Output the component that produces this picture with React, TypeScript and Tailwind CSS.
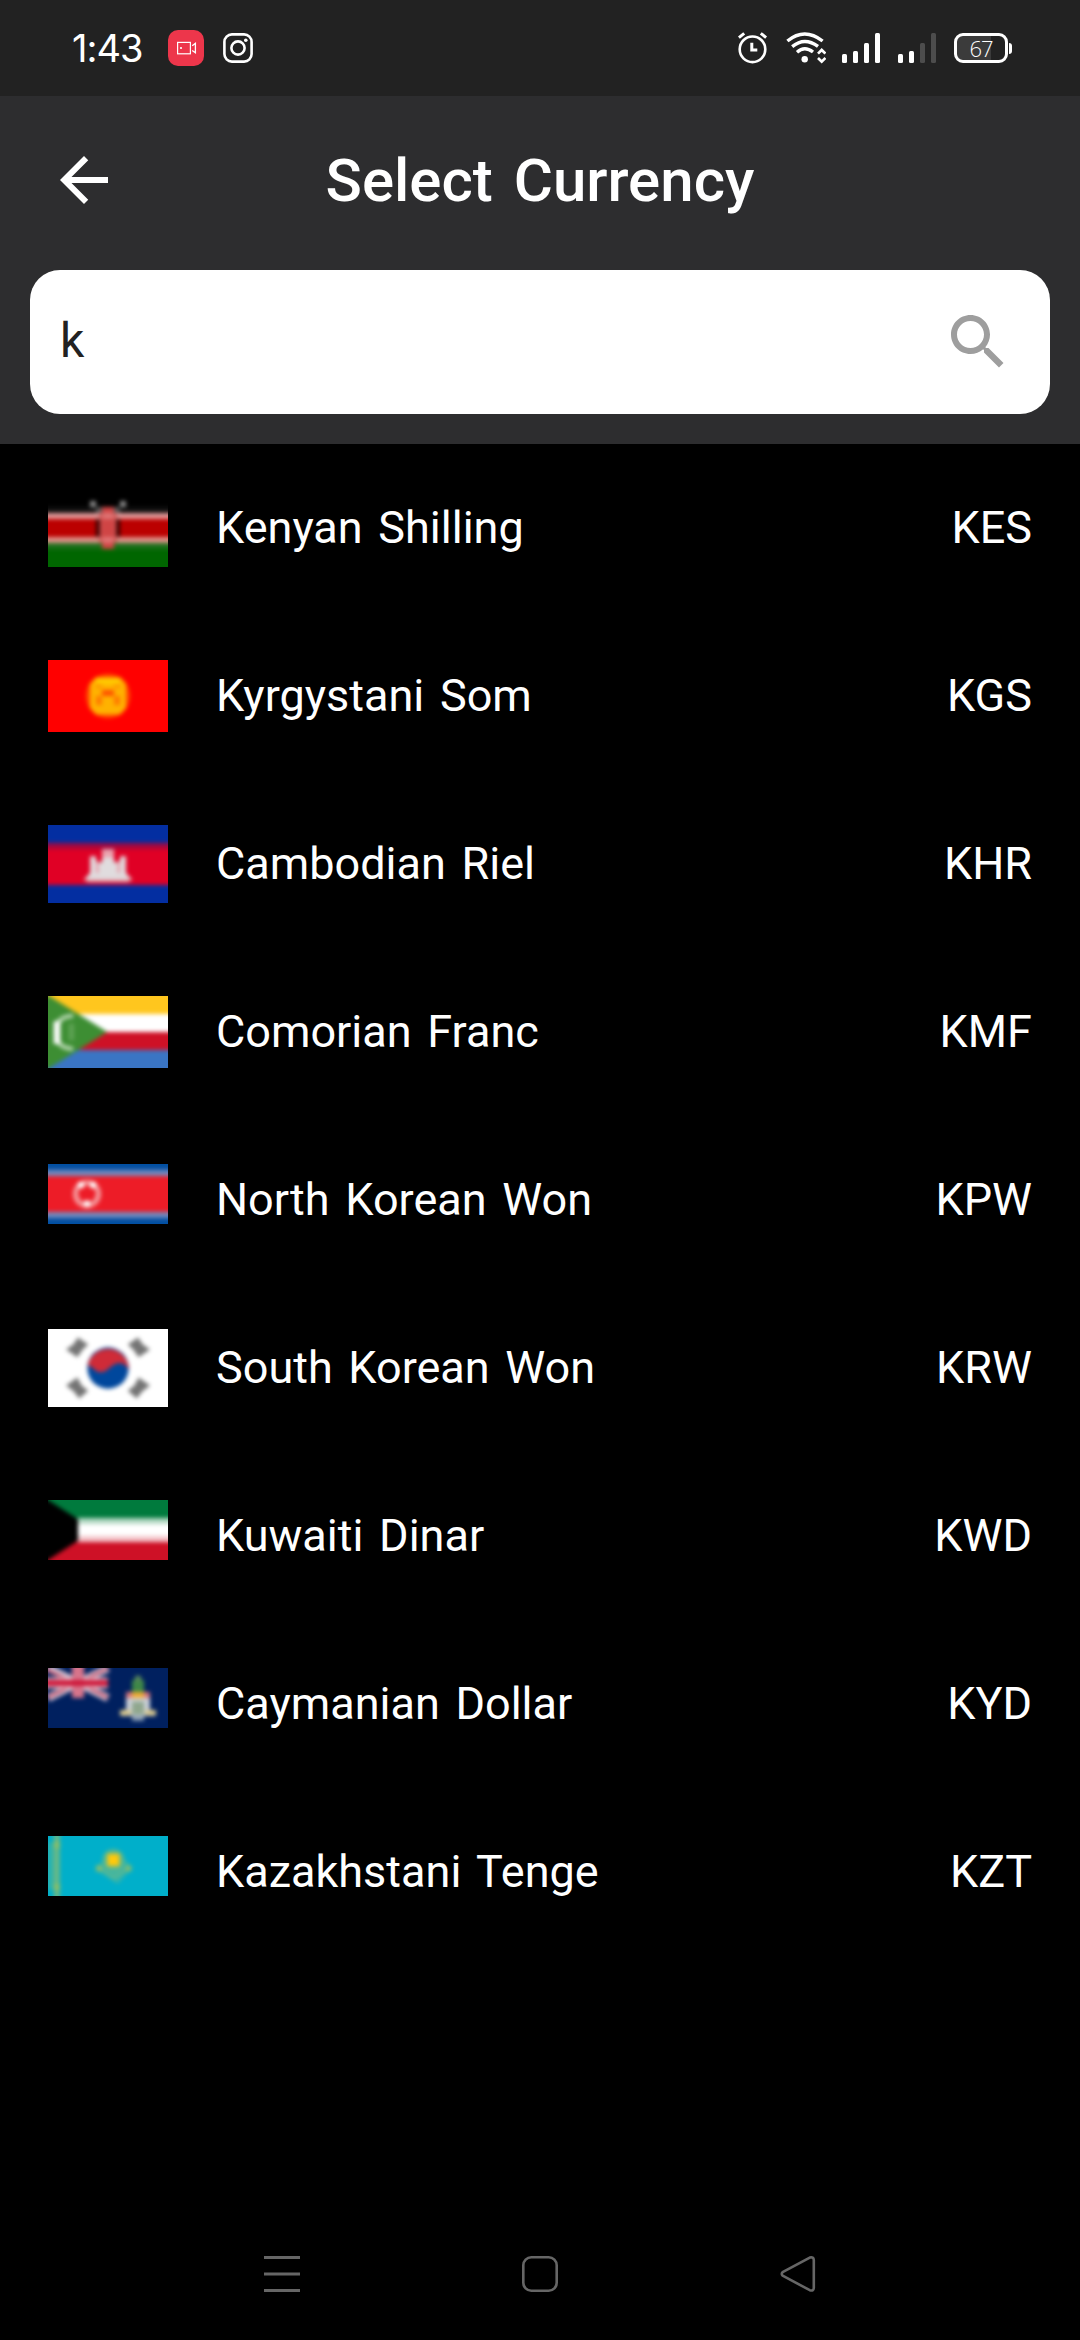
import React, { ReactNode } from "react";

/* Flags are drawn on a 20-unit wide grid and softened like small upscaled thumbnails. */
function Flag({ h, children }: { h: 10 | 12 | 13; children: ReactNode }) {
  const size = { 10: "h-[60px]", 12: "h-[72px]", 13: "h-[78px]" }[h];
  return (
    <svg viewBox={`0 0 20 ${h}`} className={`block w-[120px] ${size}`}>
      <defs>
        <filter id="soft" filterUnits="userSpaceOnUse" x="-4" y="-4" width="28" height="22" colorInterpolationFilters="sRGB">
          <feGaussianBlur stdDeviation="0.36" />
        </filter>
      </defs>
      <g filter="url(#soft)">{children}</g>
    </svg>
  );
}

/* Full-width horizontal stripe that runs past the flag's edges. */
const Stripe = ({ y, h, c }: { y: number; h: number; c: string }) => (
  <rect x="-4" y={y} width="28" height={h} fill={c} />
);

const Kenya = () => (
  <Flag h={13}>
    <Stripe y={-4} h={8} c="#000000" />
    <Stripe y={3} h={1} c="#101010" />
    <Stripe y={4} h={1} c="#e29696" />
    <Stripe y={5} h={3} c="#bb0000" />
    <Stripe y={8} h={1} c="#dd9088" />
    <Stripe y={9} h={1} c="#1d701d" />
    <Stripe y={10} h={7} c="#006600" />
    <rect x="7" y="2" width="1" height="1" fill="#8a8a8a" />
    <rect x="12" y="2" width="1" height="1" fill="#8a8a8a" />
    <rect x="8" y="3" width="1" height="1" fill="#555" />
    <rect x="11" y="3" width="1" height="1" fill="#555" />
    <rect x="8" y="5" width="1" height="3" fill="#2c0000" />
    <rect x="11" y="5" width="1" height="3" fill="#2c0000" />
    <rect x="8.6" y="4" width="2.8" height="5" fill="#d04a4a" />
    <rect x="9" y="3" width="2" height="7" fill="#d04545" />
    <rect x="9" y="4" width="2" height="1" fill="#de7474" />
    <rect x="9" y="8" width="2" height="1" fill="#e07474" />
  </Flag>
);

const Kyrgyzstan = () => (
  <Flag h={12}>
    <Stripe y={-4} h={20} c="#ff0000" />
    <circle cx="10" cy="6" r="3.7" fill="#ff4800" />
    <path d="M8 2.9H12L13 4V8L12 9.1H8L7 8V4z" fill="#ffb200" />
    <rect x="8" y="3" width="4" height="1" fill="#ffcc00" />
    <rect x="9" y="5" width="2" height="1" fill="#ff5200" />
    <rect x="8" y="6" width="1" height="1.5" fill="#ff7a00" />
    <rect x="11" y="6" width="1" height="1.5" fill="#ff7a00" />
    <rect x="8" y="4" width="1" height="0.7" fill="#ff9600" />
    <rect x="11" y="4" width="1" height="0.7" fill="#ff9600" />
  </Flag>
);

const Cambodia = () => (
  <Flag h={13}>
    <Stripe y={-4} h={21} c="#032ea1" />
    <Stripe y={3} h={1} c="#a3083f" />
    <Stripe y={4} h={6} c="#e00025" />
    <path d="M5.9 9.2L7 8V5.2H8V6.2H9V4.2H11V6.2H12V5.2H13V8L14.1 9.2z" fill="#e0dcde" />
    <rect x="6.5" y="9" width="7" height="0.5" fill="#e0b0b8" />
    <rect x="9" y="4" width="2" height="1.4" fill="#eba2ae" />
    <path d="M8.2 6V8M11.8 6V8" stroke="#e794a2" strokeWidth="0.4" />
  </Flag>
);

const Comoros = () => (
  <Flag h={12}>
    <Stripe y={-4} h={7} c="#ffc61e" />
    <Stripe y={3} h={3} c="#ffffff" />
    <Stripe y={6} h={3} c="#ce1126" />
    <Stripe y={9} h={7} c="#3a75c4" />
    <path d="M-4 -3V15L0.2 12L9.9 6L0.2 0z" fill="#3d8e33" />
    <path d="M4.2 3.3Q1.3 3.4 1.3 6Q1.3 8.7 4.2 8.8" fill="none" stroke="#b4d6ae" strokeWidth="0.7" />
    <path d="M1.5 4.2v3.8" stroke="#ffffff" strokeWidth="1.1" />
    <path d="M3.9 4.6v2.8" stroke="#5ea354" strokeWidth="0.9" />
  </Flag>
);

const NorthKorea = () => (
  <Flag h={10}>
    <Stripe y={-4} h={18} c="#024fa2" />
    <Stripe y={1} h={1} c="#7189bd" />
    <Stripe y={8} h={1} c="#7189bd" />
    <Stripe y={2} h={6} c="#ed1c27" />
    <circle cx="6.5" cy="5" r="1.9" fill="none" stroke="#f59599" strokeWidth="0.9" />
    <rect x="5" y="3" width="1" height="1" fill="#fff" />
    <rect x="7" y="3" width="1" height="1" fill="#fff" />
    <rect x="6" y="6.1" width="1" height="1" fill="#fff" />
  </Flag>
);

const SouthKorea = () => (
  <Flag h={13}>
    <Stripe y={-4} h={21} c="#ffffff" />
    <circle cx="10" cy="6.5" r="3.45" fill="#00479c" />
    <path d="M6.6 6A3.5 3.5 0 0 1 13.5 6.8Q12.6 5.3 11.3 5.8Q10.4 6.2 9.9 6.8Q8.6 7.8 7.4 6.4z" fill="#cf2b38" />
    <g fill="#747474">
      <path d="M3 3.4L4.2 2.6L5 1.4L6.7 2.6L5.8 3.4L4.9 4.7z" />
      <path d="M17 3.4L15.8 2.6L15 1.4L13.3 2.6L14.2 3.4L15.1 4.7z" />
      <path d="M3 9.4L4.9 8.1L5.6 9.4L6.7 10.3L5.2 11.6L4.3 10.4z" />
      <path d="M17 9.4L15.1 8.1L14.4 9.4L13.3 10.3L14.8 11.6L15.7 10.4z" />
    </g>
  </Flag>
);

const Kuwait = () => (
  <Flag h={10}>
    <Stripe y={-4} h={7} c="#007a3d" />
    <Stripe y={3} h={1} c="#b3d8c3" />
    <Stripe y={4} h={2} c="#ffffff" />
    <Stripe y={6} h={1} c="#f3c4c9" />
    <Stripe y={7} h={7} c="#ce1126" />
    <path d="M-4 -3L0 0L5 3.2V6.8L0 10L-4 13z" fill="#000000" />
  </Flag>
);

const Cayman = () => (
  <Flag h={10}>
    <Stripe y={-4} h={18} c="#00205f" />
    <path d="M0 0L10 5M10 0L0 5" stroke="#d5c5d5" strokeWidth="1.3" />
    <path d="M-1 -0.1L3.6 2.1M10 0L6.4 1.8M0 4.9L3.6 3.1M9.9 4.9L6.4 3.1" stroke="#c5566f" strokeWidth="0.5" />
    <rect x="-4" y="1.6" width="14" height="1.8" fill="#e6b9c6" />
    <rect x="4" y="-4" width="2" height="9" fill="#d7748b" />
    <rect x="-4" y="2" width="14" height="1" fill="#cd1638" />
    <rect x="14" y="2" width="2" height="2" fill="#3f8748" />
    <rect x="14.5" y="1.3" width="1" height="0.9" fill="#5b8a5b" />
    <rect x="13" y="4" width="4" height="1" fill="#d9767c" />
    <rect x="14" y="4" width="2" height="1" fill="#efaa32" />
    <path d="M13 5h4v2l1 1H12l1-1z" fill="#cbd0d8" />
    <rect x="14" y="5.6" width="2" height="2.2" fill="#90a78e" />
    <rect x="12" y="7" width="1.8" height="0.9" fill="#d9c88b" />
    <rect x="16.2" y="7" width="1.8" height="0.9" fill="#d9c88b" />
    <rect x="14" y="8" width="2" height="0.8" fill="#8a9db2" />
  </Flag>
);

const Kazakhstan = () => (
  <Flag h={10}>
    <Stripe y={-4} h={18} c="#00afca" />
    <rect x="0" y="1" width="1" height="8" fill="#2fb3ac" />
    <rect x="1" y="-4" width="0.95" height="18" fill="#6cb983" />
    <rect x="1" y="1" width="0.95" height="1" fill="#93bf60" />
    <rect x="1" y="8" width="0.95" height="1" fill="#93bf60" />
    <path d="M8 5.4L9.2 4L13 4L13.9 5.4L11.6 8L10.2 7z" fill="#34b4aa" />
    <path d="M8.2 5.2L10.9 6.9L13.6 5.2" fill="none" stroke="#50b798" strokeWidth="0.8" />
    <circle cx="10.9" cy="4" r="1.8" fill="#5cb88c" />
    <rect x="8" y="4.9" width="1" height="1" fill="#86bd6c" />
    <rect x="13" y="4.9" width="0.9" height="1" fill="#86bd6c" />
    <rect x="9.9" y="3" width="2" height="2" fill="#ffc90a" />
  </Flag>
);

const currencies: { name: string; code: string; flag: ReactNode }[] = [
  { name: "Kenyan Shilling", code: "KES", flag: <Kenya /> },
  { name: "Kyrgystani Som", code: "KGS", flag: <Kyrgyzstan /> },
  { name: "Cambodian Riel", code: "KHR", flag: <Cambodia /> },
  { name: "Comorian Franc", code: "KMF", flag: <Comoros /> },
  { name: "North Korean Won", code: "KPW", flag: <NorthKorea /> },
  { name: "South Korean Won", code: "KRW", flag: <SouthKorea /> },
  { name: "Kuwaiti Dinar", code: "KWD", flag: <Kuwait /> },
  { name: "Caymanian Dollar", code: "KYD", flag: <Cayman /> },
  { name: "Kazakhstani Tenge", code: "KZT", flag: <Kazakhstan /> },
];

function RecorderIcon() {
  return (
    <svg viewBox="0 0 36 36" className="ml-[28px] h-9 w-9">
      <rect width="36" height="36" rx="10" fill="#ed364b" />
      <g fill="none" stroke="#fff" strokeWidth="1.2">
        <rect x="9.6" y="12.4" width="12.8" height="11.4" />
        <path d="M24.2 15.8L27.4 13.4V22.8L24.2 20.4" strokeWidth="1.3" />
      </g>
      <circle cx="13" cy="18" r="1.1" fill="#fff" />
    </svg>
  );
}

function InstagramIcon() {
  return (
    <svg viewBox="0 0 30 30" className="ml-[19px] h-[30px] w-[30px]" fill="none" stroke="#fff">
      <rect x="1.4" y="1.4" width="27.2" height="27.2" rx="7.5" strokeWidth="2.6" />
      <circle cx="15" cy="15" r="6.6" strokeWidth="2.6" />
      <circle cx="22.8" cy="7.2" r="1.8" fill="#fff" stroke="none" />
    </svg>
  );
}

function AlarmIcon() {
  return (
    <svg viewBox="0 0 30 32" className="h-8 w-[30px]" fill="none" stroke="#fff">
      <circle cx="14.5" cy="17.3" r="12.8" strokeWidth="2.6" />
      <path d="M0.9 5.6L6.2 1.3M28.1 5.6L22.8 1.3" strokeWidth="3" />
      <path d="M13.8 10.8V17.9H19.3" strokeWidth="3" />
    </svg>
  );
}

function WifiIcon() {
  return (
    <svg viewBox="0 0 40 32" className="ml-[18px] h-8 w-10" fill="none" stroke="#fff">
      <g strokeWidth="3.4">
        <path d="M1.4 9Q18.5 -5 36.6 9" />
        <path d="M6.2 14.6Q18.5 4.4 32 14.4" />
        <path d="M11 20.2Q18.5 13.4 27 20" />
      </g>
      <circle cx="18.7" cy="27.3" r="3.2" fill="#fff" stroke="none" />
      <path d="M32 21.6L35.7 18L39.4 21.6M32 26L35.7 29.6L39.4 26" strokeWidth="2.7" />
    </svg>
  );
}

function SignalIcon({ strength }: { strength: number }) {
  const bars = ["h-[9px]", "h-3", "h-5", "h-[30px]"];
  return (
    <div className="flex h-[30px] items-end gap-[6px]">
      {bars.map((height, i) => (
        <div key={height} className={`w-[5px] rounded-[1.5px] ${height} ${i < strength ? "bg-white" : "bg-[#4d4d4d]"}`} />
      ))}
    </div>
  );
}

function Battery() {
  return (
    <div className="ml-[18px] flex items-center">
      <div className="flex h-[30px] w-[54px] items-stretch overflow-hidden rounded-[9px] border-[3px] border-white bg-gradient-to-r from-[#3b3b3b] from-70% to-transparent to-70%">
        <span className="flex flex-1 items-center justify-center font-['Open_Sans'] text-[22px] leading-none font-light tracking-[-1px] text-white">67</span>
      </div>
      <div className="ml-[1px] h-[11px] w-[3px] rounded-r-sm bg-white" />
    </div>
  );
}

function StatusBar() {
  return (
    <div className="flex h-24 items-center justify-between bg-[#222222] pr-[68px] pl-[72px]">
      <div className="flex items-center">
        <span className="w-[68px] whitespace-nowrap font-['Inter'] text-[38px] leading-none tracking-[-1px] text-white">1:43</span>
        <RecorderIcon />
        <InstagramIcon />
      </div>
      <div className="flex items-center">
        <AlarmIcon />
        <WifiIcon />
        <div className="ml-4 flex gap-[18px]">
          <SignalIcon strength={4} />
          <SignalIcon strength={2} />
        </div>
        <Battery />
      </div>
    </div>
  );
}

export default function App() {
  return (
    <div className="flex h-[2340px] w-[1080px] flex-col bg-black font-['Roboto',sans-serif]">
      <StatusBar />
      <header className="bg-[#2d2d2f] px-[30px] pb-[30px]">
        <div className="grid h-[174px] grid-cols-[90px_1fr_90px] items-center pb-[6px]">
          <button aria-label="Back" className="ml-[18px] h-[72px] w-[72px]">
            <svg viewBox="0 0 24 24" className="h-full w-full" fill="#fff">
              <path d="M20 11H7.83l5.59-5.59L12 4l-8 8 8 8 1.41-1.41L7.83 13H20v-2z" />
            </svg>
          </button>
          <h1 className="pt-[2px] text-center text-[60px] leading-[72px] font-medium [word-spacing:6px] text-white">Select Currency</h1>
        </div>
        <div className="flex h-36 items-center justify-between rounded-[30px] bg-white pr-9 pl-[30px]">
          <span className="pb-[3px] text-[48px] leading-[56px] text-[#222222]">k</span>
          <svg viewBox="0 0 24 24" className="h-[72px] w-[72px]" fill="#9e9e9e">
            <path d="M15.5 14h-.79l-.28-.27C15.41 12.59 16 11.11 16 9.5 16 5.91 13.09 3 9.5 3S3 5.91 3 9.5 5.91 16 9.5 16c1.61 0 3.09-.59 4.23-1.57l.27.28v.79l5 4.99L20.49 19l-4.99-5zm-6 0C7.01 14 5 11.99 5 9.5S7.01 5 9.5 5 14 7.01 14 9.5 11.99 14 9.5 14z" />
          </svg>
        </div>
      </header>
      <ul className="flex-1">
        {currencies.map(({ name, code, flag }) => (
          <li key={code} className="flex h-[168px] items-center px-12 text-[45px] leading-[52px] text-white">
            <div className="flex min-h-[72px] w-[120px] items-start">{flag}</div>
            <span className="ml-12 flex-1 [word-spacing:4.5px]">{name}</span>
            <span>{code}</span>
          </li>
        ))}
      </ul>
      <nav className="flex h-[132px] items-center justify-center gap-[222px]">
        <svg viewBox="0 0 36 36" className="h-9 w-9" stroke="#666" strokeWidth="3">
          <path d="M0 1.5H36M0 18H36M0 34.5H36" />
        </svg>
        <svg viewBox="0 0 36 36" className="h-9 w-9" fill="none" stroke="#666" strokeWidth="2.6">
          <rect x="1.3" y="1.3" width="33.4" height="33.4" rx="8" />
        </svg>
        <svg viewBox="0 0 36 36" className="h-9 w-9" fill="none" stroke="#666" strokeWidth="2.6" strokeLinejoin="round">
          <path d="M2.6 16.2L29.8 1.6Q33.6 0.6 33.8 4V32Q33.6 35.4 29.8 34.2L2.6 19.6Q0.9 17.9 2.6 16.2z" />
        </svg>
      </nav>
    </div>
  );
}
